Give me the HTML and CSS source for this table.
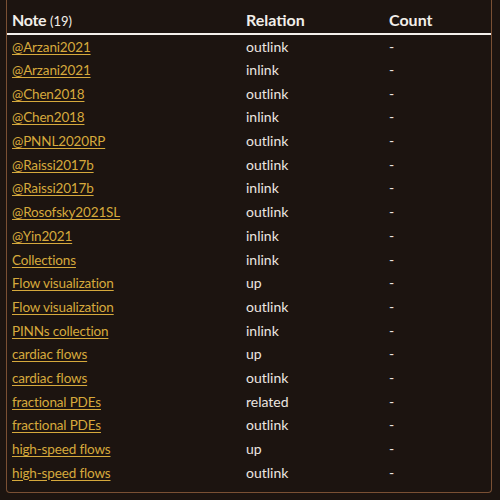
FILE: index.html
```html
<!DOCTYPE html>
<html>
<head>
<meta charset="utf-8">
<link rel="stylesheet" href="styles.css">
</head>
<body>
<div class="panel">
<table class="links">
<thead>
<tr><th class="c-note">Note <span class="count">(19)</span></th><th class="c-rel">Relation</th><th class="c-count">Count</th></tr>
</thead>
<tbody>
<tr><td><a href="#">@Arzani2021</a></td><td>outlink</td><td>-</td></tr>
<tr><td><a href="#">@Arzani2021</a></td><td>inlink</td><td>-</td></tr>
<tr><td><a href="#">@Chen2018</a></td><td>outlink</td><td>-</td></tr>
<tr><td><a href="#">@Chen2018</a></td><td>inlink</td><td>-</td></tr>
<tr><td><a href="#">@PNNL2020RP</a></td><td>outlink</td><td>-</td></tr>
<tr><td><a href="#">@Raissi2017b</a></td><td>outlink</td><td>-</td></tr>
<tr><td><a href="#">@Raissi2017b</a></td><td>inlink</td><td>-</td></tr>
<tr><td><a href="#">@Rosofsky2021SL</a></td><td>outlink</td><td>-</td></tr>
<tr><td><a href="#">@Yin2021</a></td><td>inlink</td><td>-</td></tr>
<tr><td><a href="#">Collections</a></td><td>inlink</td><td>-</td></tr>
<tr><td><a href="#">Flow visualization</a></td><td>up</td><td>-</td></tr>
<tr><td><a href="#">Flow visualization</a></td><td>outlink</td><td>-</td></tr>
<tr><td><a href="#">PINNs collection</a></td><td>inlink</td><td>-</td></tr>
<tr><td><a href="#">cardiac flows</a></td><td>up</td><td>-</td></tr>
<tr><td><a href="#">cardiac flows</a></td><td>outlink</td><td>-</td></tr>
<tr><td><a href="#">fractional PDEs</a></td><td>related</td><td>-</td></tr>
<tr><td><a href="#">fractional PDEs</a></td><td>outlink</td><td>-</td></tr>
<tr><td><a href="#">high-speed flows</a></td><td>up</td><td>-</td></tr>
<tr><td><a href="#">high-speed flows</a></td><td>outlink</td><td>-</td></tr>
</tbody>
</table>
</div>
</body>
</html>
```
FILE: styles.css
```css
html, body {
  margin: 0;
  padding: 0;
  background: #1c1410;
}
body {
  font-family: "Lato", "Liberation Sans", sans-serif;
  color: #ece6e0;
}
.panel {
  margin-left: 6px;
  width: 484px;
  border: 1px solid #7a5034;
  border-top: none;
  border-radius: 0 0 4px 4px;
  padding-bottom: 8px;
  background: #1c1410;
}
.links {
  width: 100%;
  border-collapse: collapse;
  table-layout: fixed;
}
.links th {
  height: 34px;
  box-sizing: border-box;
  padding: 6px 6px 0;
  text-align: left;
  font-size: 16px;
  font-weight: 700;
  color: #f2eee9;
  border-bottom: 2px solid #f4f0ec;
  vertical-align: middle;
}
.c-note { width: 233px; padding-left: 5px !important; letter-spacing: -0.3px; }
.c-rel { width: 143px; }
.count {
  font-size: 13px;
  font-weight: 400;
  letter-spacing: 0;
}
.links td {
  height: 23.7px;
  box-sizing: border-box;
  padding: 0 6px;
  font-size: 14px;
  vertical-align: middle;
}
.links td:first-child { padding-left: 5px; }
.links tbody tr:first-child td { padding-top: 1px; }
.links a {
  font-size: 13.5px;
  letter-spacing: -0.15px;
  color: #d6a93c;
  text-decoration: underline;
  text-underline-offset: 2px;
}
```
